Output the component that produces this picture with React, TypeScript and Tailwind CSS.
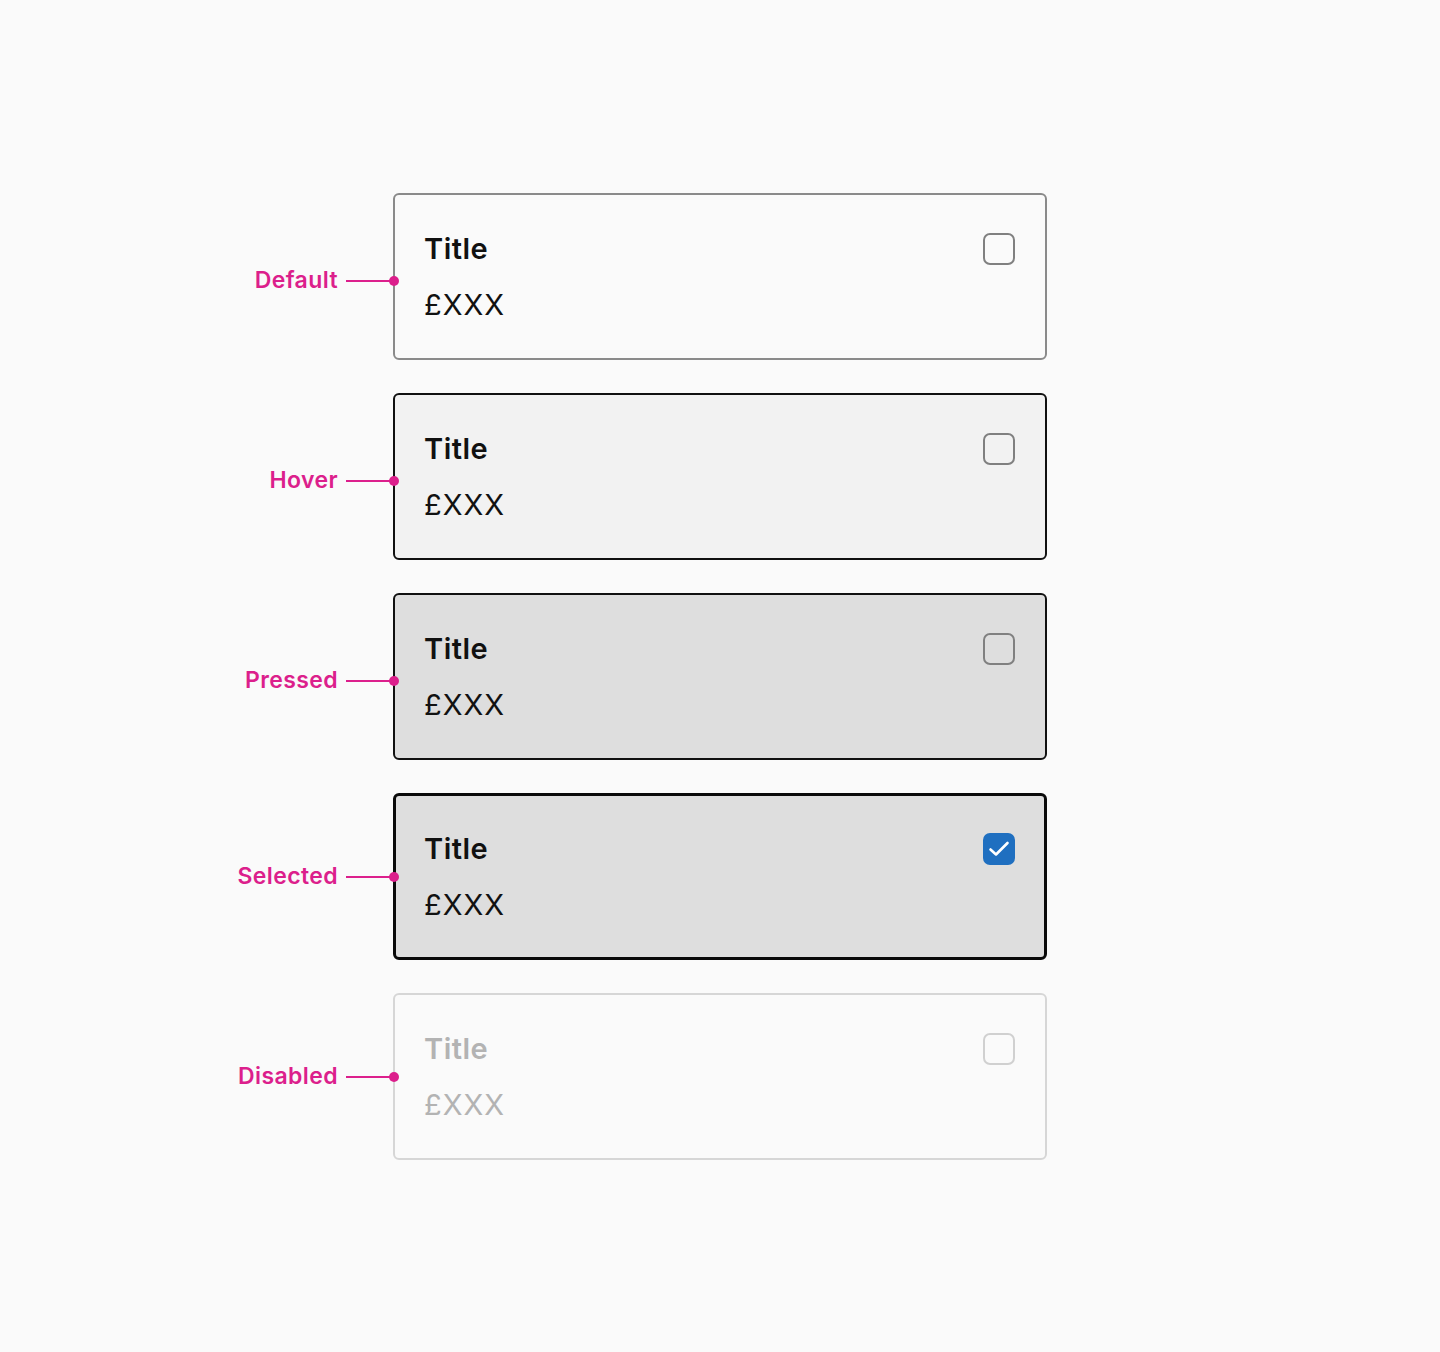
import React from "react";

type Variant = "default" | "hover" | "pressed" | "selected" | "disabled";

const rows: { label: string; v: Variant; offset: number }[] = [
  { label: "Default", v: "default", offset: 4 },
  { label: "Hover", v: "hover", offset: 4 },
  { label: "Pressed", v: "pressed", offset: 4 },
  { label: "Selected", v: "selected", offset: 0 },
  { label: "Disabled", v: "disabled", offset: 0 },
];

function cardClass(v: Variant) {
  switch (v) {
    case "default":
      return "bg-[#fafafa] border-2 border-[#8a8a8a]";
    case "hover":
      return "bg-[#f2f2f2] border-2 border-[#111111]";
    case "pressed":
      return "bg-[#dedede] border-2 border-[#111111]";
    case "selected":
      return "bg-[#dedede] border-[3px] border-[#0a0a0a]";
    case "disabled":
      return "bg-[#fafafa] border-2 border-[#d6d6d6]";
  }
}

function Checkbox({ v }: { v: Variant }) {
  if (v === "selected") {
    return (
      <div className="w-[32px] h-[32px] rounded-[7px] bg-[#1f6fc0] flex items-center justify-center">
        <svg width="24" height="24" viewBox="0 0 24 24" fill="none">
          <path d="M3.5 12.5L9 17.5L20.5 6" stroke="#ffffff" strokeWidth="2.6" strokeLinecap="round" strokeLinejoin="round" />
        </svg>
      </div>
    );
  }
  const border = v === "disabled" ? "border-[#d0d0d0]" : "border-[#808080]";
  return <div className={`w-[32px] h-[32px] rounded-[7px] border-2 ${border}`} />;
}

export default function App() {
  return (
    <div className="min-h-[1352px] w-full bg-[#fafafa] pt-[193px]" style={{ fontFamily: "Inter, 'Noto Sans', sans-serif" }}>
      <div className="flex flex-col gap-[33px]">
        {rows.map((r) => {
          const disabled = r.v === "disabled";
          const sel = r.v === "selected";
          return (
            <div key={r.label} className="flex items-stretch">
              <div className="w-[393px] flex justify-end items-center relative" style={{ paddingTop: r.offset * 2 }}>
                <span className="text-[23px] font-semibold text-[#dc1f8c] leading-none mr-[8px] tracking-[0.4px]">{r.label}</span>
                <div className="w-[47px] h-[2px] bg-[#dc1f8c] relative">
                  <div className="absolute right-[-6px] top-[-4px] w-[10px] h-[10px] rounded-full bg-[#dc1f8c] z-10" />
                </div>
              </div>
              <div
                className={`w-[654px] h-[167px] rounded-[6px] flex justify-between ${cardClass(r.v)} ${sel ? "pl-[28px] pr-[29px] pt-[37px]" : "pl-[29px] pr-[30px] pt-[38px]"}`}
              >
                <div className="flex flex-col">
                  <div className={`text-[29px] font-semibold leading-[36px] -mt-[2px] tracking-[0.5px] ${disabled ? "text-[#b3b3b3]" : "text-[#111111]"}`}>Title</div>
                  <div className={`text-[29px] leading-[36px] mt-[20px] tracking-[1px] ${disabled ? "text-[#b3b3b3]" : "text-[#111111]"}`}>£XXX</div>
                </div>
                <div>
                  <Checkbox v={r.v} />
                </div>
              </div>
            </div>
          );
        })}
      </div>
    </div>
  );
}
